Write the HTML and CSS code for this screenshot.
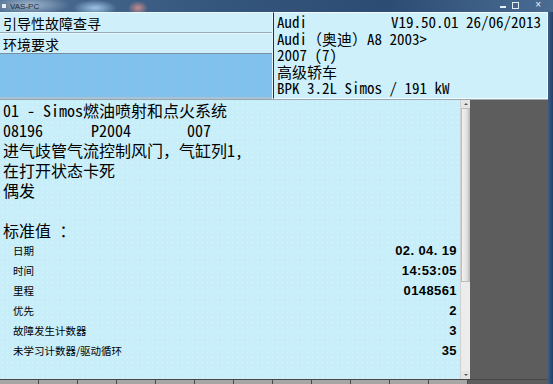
FILE: index.html
```html
<!DOCTYPE html>
<html lang="zh-CN">
<head>
    <meta charset="UTF-8">
    <meta name="viewport" content="width=device-width, initial-scale=1.0">
    <title>VAS-PC</title>
    <link rel="stylesheet" href="styles.css">
</head>
<body>
    <div class="titlebar">
        <span class="app-icon"></span>
        <span class="app-name">VAS-PC</span>
        <div class="win-buttons">
            <span class="btn-min"></span>
            <span class="btn-max"></span>
            <span class="btn-close">&#215;</span>
        </div>
    </div>

    <div class="window">
        <div class="client">
            <div class="header">
                <div class="nav">
                    <div class="nav-row">引导性故障查寻</div>
                    <div class="nav-row">环境要求</div>
                    <div class="nav-fill"></div>
                </div>
                <div class="vehicle">
                    <div class="vehicle-line split"><span>Audi</span><span>V19.50.01 26/06/2013</span></div>
                    <div class="vehicle-line">Audi（奥迪）A8 2003&gt;</div>
                    <div class="vehicle-line">2007 (7)</div>
                    <div class="vehicle-line">高级轿车</div>
                    <div class="vehicle-line">BPK 3.2L Simos / 191 kW</div>
                </div>
            </div>

            <div class="body">
                <div class="fault">
                    <div class="fault-text">
                        <div>01 - Simos燃油喷射和点火系统</div>
                        <div>08196      P2004       007</div>
                        <div>进气歧管气流控制风门，气缸列1,</div>
                        <div>在打开状态卡死</div>
                        <div>偶发</div>
                    </div>
                    <div class="std-title">标准值 ：</div>
                    <ul class="std-list">
                        <li><span class="label">日期</span><span class="value">02. 04. 19</span></li>
                        <li><span class="label">时间</span><span class="value">14:53:05</span></li>
                        <li><span class="label">里程</span><span class="value">0148561</span></li>
                        <li><span class="label">优先</span><span class="value">2</span></li>
                        <li><span class="label">故障发生计数器</span><span class="value">3</span></li>
                        <li><span class="label">未学习计数器/驱动循环</span><span class="value">35</span></li>
                    </ul>
                </div>
                <div class="scrollbar">
                    <span class="arrow up"></span>
                    <span class="thumb"></span>
                    <span class="track"></span>
                    <span class="arrow down"></span>
                </div>
                <div class="backdrop"></div>
            </div>

            <div class="taskbar">
                <span></span><span></span><span></span><span></span>
                <span></span><span></span><span></span><span></span>
                <span></span><span></span><span></span><span></span>
            </div>
        </div>
        <div class="frame"></div>
    </div>
</body>
</html>
```

FILE: styles.css
```css
html, body {
    margin: 0;
    padding: 0;
}
body {
    width: 553px;
    height: 384px;
    overflow: hidden;
    background: #2b4a6e;
    font-family: "Noto Sans CJK SC", sans-serif;
    color: #000;
}

/* window title bar */
.titlebar {
    height: 12px;
    display: flex;
    align-items: center;
    position: relative;
    background:
        radial-gradient(ellipse 22px 8px at 95px 8px, #9cc4e4 0%, rgba(156,196,228,0) 100%),
        radial-gradient(ellipse 10px 7px at 138px 8px, #c98a8a 0%, rgba(201,138,138,0) 100%),
        radial-gradient(ellipse 40px 10px at 30px 5px, #9fb6cc 0%, rgba(159,182,204,0) 100%),
        linear-gradient(90deg, #4f6f93 0%, #34557c 40%, #2d4c74 70%, #4a6c93 100%);
}
.app-icon {
    width: 6px;
    height: 6px;
    margin-left: 1px;
    background: #e8eef4;
    border: 1px solid #6b7f94;
    box-sizing: border-box;
}
.app-name {
    margin-left: 3px;
    font-family: "Liberation Sans", sans-serif;
    font-size: 8px;
    color: #1c2b3c;
}
.win-buttons {
    position: absolute;
    right: 12px;
    top: 1px;
    display: flex;
    gap: 6px;
    align-items: flex-start;
}
.btn-min {
    width: 6px;
    height: 2px;
    margin-top: 5px;
    background: #e8eef6;
}
.btn-max {
    width: 5px;
    height: 5px;
    margin-top: 1px;
    margin-right: 10px;
    border: 1px solid #e8eef6;
}
.btn-close {
    font-family: "Liberation Sans", sans-serif;
    font-size: 10px;
    line-height: 8px;
    color: #f2f5f8;
}

.window {
    display: flex;
    height: 372px;
}
.client {
    width: 548px;
    display: flex;
    flex-direction: column;
}
.frame {
    flex: 1;
    background: linear-gradient(90deg, #3d5d84, #22406a);
}

/* header: navigation + vehicle info */
.header {
    display: flex;
    height: 87px;
}
.nav {
    width: 272px;
    display: flex;
    flex-direction: column;
    border-right: 1px solid #e6f6fc;
    background: #cfeffb;
}
.nav-row {
    height: 21px;
    line-height: 21px;
    padding-left: 3px;
    font-size: 14px;
    border-top: 1px solid #eaf8fd;
    border-bottom: 1px solid #94abb8;
    box-sizing: border-box;
}
.nav-row + .nav-row {
    border-bottom-color: #7890a0;
}
.nav-fill {
    flex: 1;
    background-color: #7cc3ee;
    background-image: radial-gradient(circle, rgba(200, 150, 220, 0.6) 0.5px, transparent 0.8px);
    background-size: 4px 4px;
    border-bottom: 2px solid #a8c4d4;
}
.vehicle {
    flex: 1;
    background: #cdf0fb;
    border: 1px solid #f4fbfe;
    border-left: 1px solid #2a2f33;
    padding: 1px 6px 0 3px;
    font-family: "Noto Sans Mono CJK SC", "Liberation Mono", monospace;
    font-size: 15px;
}
.vehicle-line {
    height: 16.6px;
    line-height: 16.6px;
    white-space: pre;
}
.split {
    display: flex;
    justify-content: space-between;
}

/* fault detail */
.body {
    flex: 1;
    display: flex;
    border-top: 1px solid #9aa6ad;
}
.fault {
    width: 454px;
    padding: 0 3px;
    background-color: #c8eefa;
    background-image: radial-gradient(circle, #e2f6fd 0.5px, transparent 0.8px);
    background-size: 5px 5px;
}
.fault-text {
    font-family: "Noto Sans Mono CJK SC", "Liberation Mono", monospace;
    font-size: 16px;
    line-height: 20px;
}
.fault-text div {
    white-space: pre;
}
.std-title {
    margin-top: 20px;
    font-size: 16px;
    line-height: 20px;
    word-spacing: 5px;
}
.std-list {
    list-style: none;
    margin: 0;
    padding: 0 0 0 10px;
}
.std-list li {
    display: flex;
    justify-content: space-between;
    align-items: center;
    height: 20px;
}
.label {
    font-size: 10.5px;
}
.value {
    font-family: "Liberation Sans", sans-serif;
    font-size: 13px;
    font-weight: bold;
    letter-spacing: 0.4px;
}

.scrollbar {
    width: 9px;
    display: flex;
    flex-direction: column;
    background: #e4e4e4;
    border-left: 1px solid #d0d0d0;
}
.arrow {
    height: 8px;
    position: relative;
}
.arrow::after {
    content: "";
    position: absolute;
    left: 3px;
    border-left: 2px solid transparent;
    border-right: 2px solid transparent;
}
.arrow.up::after {
    top: 3px;
    border-bottom: 2px solid #555;
}
.arrow.down::after {
    top: 3px;
    border-top: 2px solid #555;
}
.thumb {
    height: 174px;
    background: linear-gradient(90deg, #f2f2f2, #e0e0e0 70%, #c4c4c4);
    border: 1px solid #bdbdbd;
    box-sizing: border-box;
}
.track {
    flex: 1;
    background: #ececec;
}
.backdrop {
    flex: 1;
    background: #5d5d5d;
}

.taskbar {
    height: 4px;
    display: flex;
    background: #5d5d5d;
    border-top: 1px solid #474747;
}
.taskbar span {
    width: 38px;
    background: #a6a6a6;
    border-right: 1px solid #4a4a4a;
}
```
